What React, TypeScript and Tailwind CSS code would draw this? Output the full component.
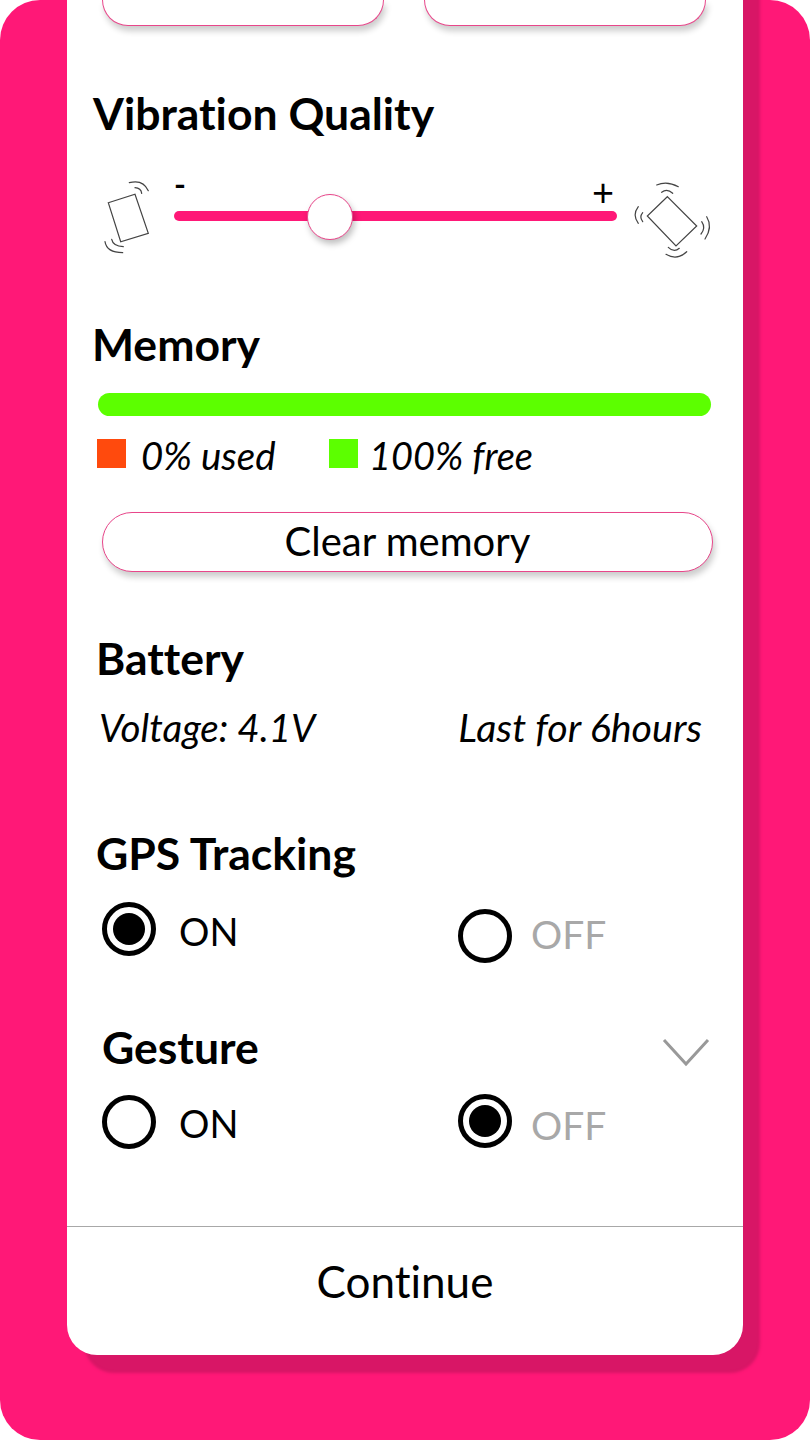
import React from "react";

function TiltPhone() {
  return (
    <svg width="48" height="76" viewBox="0 0 48 76" fill="none" stroke="#444" strokeWidth="1.2" strokeLinecap="round" className="shrink-0 overflow-visible">
      <path d="M4.300 21.700 L31 13.300 L44.300 52.300 L16.700 60.700 Z" />
      <path d="M25.300 1.700 Q39 -2 44.300 9.700" />
      <path d="M31 6.700 Q37 7 37.700 12.300" />
      <path d="M7.700 58.300 Q9 65 19.300 65.700" />
      <path d="M1 60.700 Q2.700 71.700 18.700 71.700" />
    </svg>
  );
}

function DiamondPhone() {
  return (
    <svg width="78" height="80" viewBox="0 0 78 80" fill="none" stroke="#444" strokeWidth="1.2" strokeLinecap="round" className="shrink-0 overflow-visible">
      <path d="M33.300 15.700 L13.300 35 L42 65 L62.700 45 Z" />
      <path d="M22.700 4 Q33 -0.500 44.300 5.700" />
      <path d="M27.700 11.300 Q33 7 38.700 12.300" />
      <path d="M4.300 25.700 Q-2 34 4.300 42.300" />
      <path d="M8.700 31.700 Q5 36 8.700 40.700" />
      <path d="M67.700 40.700 Q72 47 67 53" />
      <path d="M72.700 35.700 Q79 46 71 58" />
      <path d="M34.300 66.300 Q40 72 45.300 67.300" />
      <path d="M32 73.300 Q43 80 52.700 70.700" />
    </svg>
  );
}

function Radio({ on }: { on: boolean }) {
  return (
    <span className="w-[54px] h-[54px] rounded-full border-[5px] border-black flex items-center justify-center shrink-0">
      {on && <span className="w-[32px] h-[32px] rounded-full bg-black" />}
    </span>
  );
}

function Option({ on, label, muted, labelClass }: { on: boolean; label: string; muted?: boolean; labelClass?: string }) {
  return (
    <div className="flex items-center">
      <Radio on={on} />
      <span className={`leading-none ${muted ? "ml-[19px] text-[39px] text-[#a8a8a8]" : "ml-[23px] text-[38px] text-black"} ${labelClass ?? ""}`}>{label}</span>
    </div>
  );
}

const btnShadow = "bg-white border border-[#e8468a] shadow-[2px_5px_6px_rgba(0,0,0,0.2)]";
const heading = "text-[44.5px] leading-[52px] font-bold";

export default function App() {
  return (
    <div className="w-[810px] h-[1440px] bg-white font-['Lato',sans-serif] text-black [font-variant-ligatures:none]">
      <div className="w-full h-full rounded-[40px] bg-[#ff1877] overflow-hidden pl-[67px]">
        <div className="-mt-[40px] w-[676px] h-[1395px] pt-[40px] bg-white rounded-b-[30px] shadow-[17px_18px_3px_#d81666] flex flex-col">
          <div className="flex gap-[40px] pl-[35px] h-[26px]">
            <div className={`w-[282px] h-[26px] border-t-0 rounded-b-[36px] ${btnShadow}`} />
            <div className={`w-[282px] h-[26px] border-t-0 rounded-b-[36px] ${btnShadow}`} />
          </div>

          <h2 className={`mt-[61px] ml-[26px] ${heading}`}>Vibration Quality</h2>

          <div className="mt-[41px] ml-[37px] flex h-[80px] items-start">
            <div className="mt-[1px]"><TiltPhone /></div>
            <div className="ml-[22px] w-[443px] shrink-0 relative h-[80px]">
              <span className="absolute left-0 top-[-14px] text-[32px] leading-[36px] font-bold">-</span>
              <span className="absolute right-[3px] top-[-9px] text-[38px] leading-[40px]">+</span>
              <div className="absolute left-0 right-0 top-[31px] h-[10px] rounded-full bg-[#ff1877]" />
              <div className="absolute left-[133px] top-[14px] w-[46px] h-[46px] rounded-full bg-white border border-[#e8468a] shadow-[2px_4px_6px_rgba(0,0,0,0.25)]" />
            </div>
            <div className="ml-[17px] mt-[1px]"><DiamondPhone /></div>
          </div>

          <h2 className={`mt-[58px] ml-[25px] ${heading}`}>Memory</h2>

          <div className="mt-[23px] ml-[31px] w-[613px] h-[23px] rounded-full bg-[#5cff00]" />
          <div className="mt-[17px] ml-[30px] flex items-center h-[44px]">
            <span className="w-[29px] h-[29px] bg-[#ff4a0d] -translate-y-[2px]" />
            <span className="ml-[15px] w-[188px] text-[38.5px] italic leading-none">0% used</span>
            <span className="w-[29px] h-[29px] bg-[#5cff00] -translate-y-[2px]" />
            <span className="ml-[11px] text-[38px] italic leading-none">100% free</span>
          </div>

          <div className={`mt-[35px] ml-[35px] w-[611px] h-[60px] pb-[3px] rounded-full flex items-center justify-center text-[40px] leading-none ${btnShadow}`}>
            Clear memory
          </div>

          <h2 className={`mt-[60px] ml-[29px] ${heading}`}>Battery</h2>
          <div className="mt-[20px] ml-[32px] w-[603px] flex justify-between items-center text-[38.5px] italic leading-[46px]">
            <span>Voltage: 4.1V</span>
            <span className="text-[39.4px]">Last for 6hours</span>
          </div>

          <h2 className={`mt-[77px] ml-[29px] ${heading}`}>GPS Tracking</h2>
          <div className="mt-[23px] ml-[35px] flex items-start h-[62px]">
            <div className="w-[356px]"><Option on label="ON" labelClass="translate-y-[2px]" /></div>
            <div className="mt-[7px]"><Option on={false} label="OFF" muted labelClass="-translate-y-[2px]" /></div>
          </div>

          <div className="mt-[57px] ml-[35px] w-[609px] flex justify-between items-center h-[52px]">
            <h2 className={heading}>Gesture</h2>
            <svg width="50" height="32" viewBox="0 0 50 32" fill="none" stroke="#999" strokeWidth="3" className="mt-[12px]">
              <path d="M3 3 L25 27 L47 3" />
            </svg>
          </div>
          <div className="mt-[22px] ml-[35px] flex items-start">
            <div className="w-[356px]"><Option on={false} label="ON" labelClass="translate-y-[1px]" /></div>
            <div className="-mt-[1px]"><Option on label="OFF" muted labelClass="translate-y-[4px]" /></div>
          </div>

          <div className="mt-auto h-[129px] pb-[20px] border-t border-[#a8a8a8] flex items-center justify-center text-[44px] leading-none">
            Continue
          </div>
        </div>
      </div>
    </div>
  );
}
